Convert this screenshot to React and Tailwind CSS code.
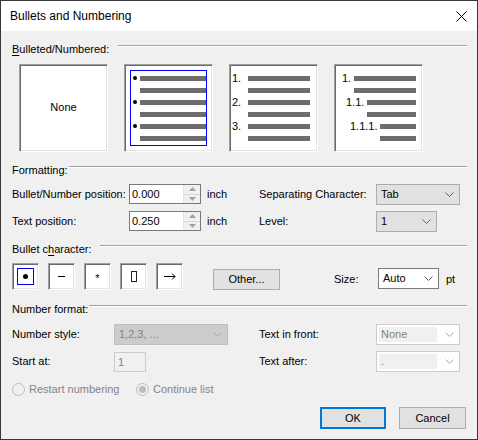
import React from 'react';

const sunken = 'border border-t-[#a0a0a0] border-l-[#a0a0a0] border-b-white border-r-white shadow-[inset_1px_1px_0_#696969,inset_-1px_-1px_0_#e3e3e3]';

const Bar = ({ w }) => <div className={`h-[5px] bg-[#6d6d6d] ${w}`} />;

const SectionHeader = ({ label, labelWidth, underlineIdx, top }) => (
    <div className={`flex h-[14px] ${top}`}>
        <div className={`shrink-0 leading-[14px] ${labelWidth}`}>
            {underlineIdx === undefined ? label : (
                <>
                    {label.slice(0, underlineIdx)}
                    <span className="underline underline-offset-2">{label[underlineIdx]}</span>
                    {label.slice(underlineIdx + 1)}
                </>
            )}
        </div>
        <div className="mt-[3px] h-[2px] flex-1 border-t border-b border-t-[#a0a0a0] border-b-white" />
    </div>
);

const Chevron = ({ color = '#606060' }) => (
    <svg width="9" height="5" viewBox="0 0 9 5" fill="none">
        <path d="M0.5 0.5 L4.5 4.5 L8.5 0.5" stroke={color} strokeWidth="1" />
    </svg>
);

const SpinBox = ({ value }) => (
    <div className="flex h-[20px] w-[72px] border border-[#7a7a7a] bg-white">
        <div className="flex-1 pl-[2px] leading-[18px]">{value}</div>
        <div className="flex w-[17px] flex-col border-l border-[#e3e3e3]">
            <div className="flex flex-1 items-center justify-center bg-[#f0f0f0] border-b border-[#d9d9d9]">
                <svg width="7" height="4" viewBox="0 0 7 4"><path d="M0 4 L3.5 0 L7 4 Z" fill="#a0a0a0" /></svg>
            </div>
            <div className="flex flex-1 items-center justify-center bg-[#f0f0f0]">
                <svg width="7" height="4" viewBox="0 0 7 4"><path d="M0 0 L3.5 4 L7 0 Z" fill="#a0a0a0" /></svg>
            </div>
        </div>
    </div>
);

const Combo = ({ value, width, height = 'h-[21px]', variant = 'button' }) => {
    const styles = {
        button: 'bg-[#e1e1e1] border-[#adadad] text-black',
        edit: 'bg-white border-[#7a7a7a] text-black',
        disabled: 'bg-[#cccccc] border-[#bfbfbf] text-[#838383]',
        disabledEdit: 'bg-white border-[#cccccc] text-[#838383]',
    };
    return (
        <div className={`flex items-center border ${styles[variant]} ${width} ${height}`}>
            {variant === 'disabledEdit' ? (
                <div className="m-[2px] flex-1 self-stretch bg-[#f0f0f0] pl-[2px] leading-[15px]">{value}</div>
            ) : (
                <div className="flex-1 pl-[4px] leading-[15px]">{value}</div>
            )}
            <div className="flex w-[20px] justify-center">
                <Chevron color={variant.startsWith('disabled') ? '#a8a8a8' : '#606060'} />
            </div>
        </div>
    );
};

const PreviewBox = ({ children, className = '' }) => (
    <div className={`h-[88px] w-[89px] bg-white ${sunken} p-[1px]`}>
        <div className={`h-full w-full ${className}`}>{children}</div>
    </div>
);

const BulletBox = ({ children, selected }) => (
    <div className={`flex h-[27px] w-[27px] items-center justify-center bg-white ${sunken}`}>
        <div className={`flex h-[17px] w-[17px] items-center justify-center ${selected ? 'border border-[#0000ff]' : ''}`}>
            {children}
        </div>
    </div>
);

const Radio = ({ checked, label }) => (
    <div className="flex items-center">
        <div className="flex h-[13px] w-[13px] items-center justify-center rounded-full border border-[#bcbcbc] bg-[#f0f0f0]">
            {checked && <div className="h-[7px] w-[7px] rounded-full bg-[#bcbcbc]" />}
        </div>
        <span className="ml-[4px] text-[#838383]">{label}</span>
    </div>
);

export default function App() {
    const rows = [0, 1, 2, 3, 4, 5];

    return (
        <div
            className="flex h-[440px] w-[478px] flex-col border border-[#383838] bg-[#f0f0f0] text-[11px] text-black"
            style={{ fontFamily: '"Liberation Sans", Arial, sans-serif' }}
        >
            {/* title bar */}
            <div className="flex h-[30px] shrink-0 items-center justify-between bg-white pl-[9px] pr-[10px]">
                <span className="text-[12px]">Bullets and Numbering</span>
                <svg width="11" height="11" viewBox="0 0 11 11">
                    <path d="M0.5 0.5 L10.5 10.5 M10.5 0.5 L0.5 10.5" stroke="#000" strokeWidth="1" />
                </svg>
            </div>

            <div className="flex flex-1 flex-col pl-[11px] pr-[10px]">
                <SectionHeader label="Bulleted/Numbered:" labelWidth="w-[106px]" underlineIdx={0} top="mt-[11px]" />

                {/* preview boxes */}
                <div className="ml-[7px] mt-[8px] flex gap-[16px]">
                    <PreviewBox className="flex items-center justify-center">
                        <span className="-mt-[2px]">None</span>
                    </PreviewBox>
                    <PreviewBox>
                        <div className="m-[4px] h-[76px] w-[77px] overflow-hidden border border-[#0000ff] pt-[1px]">
                            {rows.map(i => (
                                <div key={i} className="flex h-[12px] items-center">
                                    <div className="w-[9px]">
                                        {i % 2 === 0 && <div className="ml-[2px] h-[4px] w-[4px] rounded-full bg-black" />}
                                    </div>
                                    <Bar w="w-[66px]" />
                                </div>
                            ))}
                        </div>
                    </PreviewBox>
                    <PreviewBox>
                        <div className="pt-[6px]">
                            {rows.map(i => (
                                <div key={i} className="flex h-[12px] items-center">
                                    <div className="w-[17px] pl-[1px] leading-[12px]">{i % 2 === 0 ? `${i / 2 + 1}.` : ''}</div>
                                    <Bar w="w-[62px]" />
                                </div>
                            ))}
                        </div>
                    </PreviewBox>
                    <PreviewBox>
                        <div className="pt-[6px] pr-[5px]">
                            {[
                                ['1.', 'pl-[6px]', 'w-[62px]'],
                                ['', '', 'w-[62px]'],
                                ['1.1.', 'pl-[10px]', 'w-[49px]'],
                                ['', '', 'w-[49px]'],
                                ['1.1.1.', 'pl-[14px]', 'w-[36px]'],
                                ['', '', 'w-[36px]'],
                            ].map(([num, pl, w], i) => (
                                <div key={i} className="flex h-[12px] items-center">
                                    <div className={`flex-1 leading-[12px] ${pl}`}>{num}</div>
                                    <Bar w={w} />
                                </div>
                            ))}
                        </div>
                    </PreviewBox>
                </div>

                <SectionHeader label="Formatting:" labelWidth="w-[57px]" top="mt-[11px]" />

                <div className="mt-[7px] flex h-[20px] items-center">
                    <div className="flex w-[247px] items-center">
                        <div className="w-[117px]">Bullet/Number position:</div>
                        <SpinBox value="0.000" />
                        <span className="ml-[6px]">inch</span>
                    </div>
                    <div className="w-[117px]">Separating Character:</div>
                    <Combo value="Tab" width="w-[84px]" />
                </div>
                <div className="mt-[7px] flex h-[20px] items-center">
                    <div className="flex w-[247px] items-center">
                        <div className="w-[117px]">Text position:</div>
                        <SpinBox value="0.250" />
                        <span className="ml-[6px]">inch</span>
                    </div>
                    <div className="w-[117px]">Level:</div>
                    <Combo value="1" width="w-[61px]" />
                </div>

                <SectionHeader label="Bullet character:" labelWidth="w-[88px]" underlineIdx={8} top="mt-[11px]" />

                <div className="mt-[7px] flex h-[27px] items-start">
                    <div className="flex gap-[9px]">
                        <BulletBox selected>
                            <div className="h-[5px] w-[5px] rounded-full bg-black" />
                        </BulletBox>
                        <BulletBox>
                            <div className="h-[1px] w-[7px] bg-black" />
                        </BulletBox>
                        <BulletBox>
                            <span className="mt-[3px] text-[11px] leading-[11px]">*</span>
                        </BulletBox>
                        <BulletBox>
                            <div className="h-[11px] w-[6px] border border-[#202020]" />
                        </BulletBox>
                        <BulletBox>
                            <svg width="12" height="7" viewBox="0 0 12 7" fill="none">
                                <path d="M0 3.5 H11 M8 0.5 L11 3.5 L8 6.5" stroke="#000" strokeWidth="1" />
                            </svg>
                        </BulletBox>
                    </div>
                    <div className="ml-[30px] mt-[6px] flex h-[21px] w-[67px] items-center justify-center border border-[#adadad] bg-[#e1e1e1]">
                        Other...
                    </div>
                    <div className="ml-[54px] mt-[8px] w-[44px] leading-[16px]">Size:</div>
                    <div className="mt-[5px]">
                        <Combo value="Auto" width="w-[61px]" height="h-[21px]" variant="edit" />
                    </div>
                    <span className="ml-[7px] mt-[8px] leading-[16px]">pt</span>
                </div>

                <SectionHeader label="Number format:" labelWidth="w-[77px]" top="mt-[12px]" />

                <div className="mt-[8px] flex h-[21px] items-center">
                    <div className="flex w-[247px] items-center">
                        <div className="w-[102px]">Number style:</div>
                        <Combo value="1,2,3, ..." width="w-[114px]" variant="disabled" />
                    </div>
                    <div className="w-[117px]">Text in front:</div>
                    <Combo value="None" width="w-[84px]" variant="disabledEdit" />
                </div>
                <div className="mt-[6px] flex h-[21px] items-center">
                    <div className="flex w-[247px] items-center">
                        <div className="w-[102px]">Start at:</div>
                        <div className="h-[20px] w-[32px] border border-[#cccccc] bg-[#f0f0f0] pl-[3px] leading-[18px] text-[#838383]">1</div>
                    </div>
                    <div className="w-[117px]">Text after:</div>
                    <Combo value="." width="w-[84px]" variant="disabledEdit" />
                </div>

                <div className="mt-[11px] flex h-[13px] items-center">
                    <div className="w-[124px]">
                        <Radio label="Restart numbering" />
                    </div>
                    <Radio checked label="Continue list" />
                </div>

                <div className="mt-[11px] flex justify-end gap-[13px] pr-[1px]">
                    <div className="flex h-[22px] w-[66px] items-center justify-center border-2 border-[#0078d7] bg-[#e1e1e1]">OK</div>
                    <div className="flex h-[22px] w-[67px] items-center justify-center border border-[#adadad] bg-[#e1e1e1]">Cancel</div>
                </div>
            </div>
        </div>
    );
}
